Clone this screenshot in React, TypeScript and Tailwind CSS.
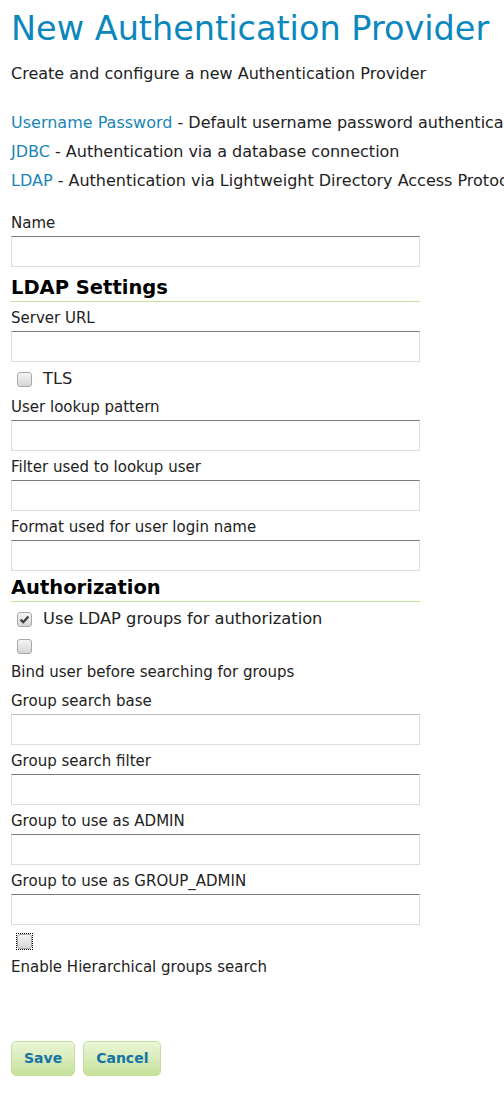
import React from 'react';

const font = { fontFamily: '"DejaVu Sans", Verdana, sans-serif' };

function Box({ checked = false, focus = false }: { checked?: boolean; focus?: boolean }) {
  return (
    <span className={`inline-flex h-[15px] w-[15px] items-center justify-center ${focus ? 'outline-1 outline-dotted outline-black' : ''}`}>
      <span className="flex h-[15px] w-[15px] items-center justify-center rounded-[3px] border border-[#a8a8a8] bg-gradient-to-b from-[#f4f4f4] to-[#d6d6d6]">
        {checked && (
          <svg width="11" height="11" viewBox="0 0 11 11">
            <path d="M1.6 5.6 L4.3 8.2 L9.4 2.4" fill="none" stroke="#3a3a3a" strokeWidth="2.2" />
          </svg>
        )}
      </span>
    </span>
  );
}

function Field({ label, light = false }: { label: string; light?: boolean }) {
  return (
    <div className="flex flex-col">
      <label className="text-[15px] leading-[20px] text-[#222]">{label}</label>
      <input
        className={`mt-[3px] h-[31px] w-[409px] border border-[#dcdcdc] ${light ? 'border-t-[#bdbdbd]' : 'border-t-[#7a7a7a]'} bg-white`}
      />
    </div>
  );
}

function Section({ title, top }: { title: string; top: string }) {
  return (
    <h2 className={`${top} w-[409px] border-b border-[#c5e09a] pb-[4px] text-[19.5px] font-bold leading-[18px] text-black`}>
      {title}
    </h2>
  );
}

function Check({ label, checked = false }: { label: string; checked?: boolean }) {
  return (
    <div className="flex items-center gap-[11px] pl-[6px] text-[16.3px] leading-[20px]">
      <Box checked={checked} />
      <span>{label}</span>
    </div>
  );
}

export default function App() {
  return (
    <div className="min-h-screen overflow-hidden bg-white px-[11px] pt-[7px] text-[#222]" style={font}>
      <h1 className="whitespace-nowrap text-[33.5px] leading-[44px] text-[#0a87bd]">New Authentication Provider</h1>
      <p className="mt-[13px] whitespace-nowrap text-[16px] leading-[20px]">Create and configure a new Authentication Provider</p>

      <div className="mt-[24px] flex flex-col whitespace-nowrap text-[16px] leading-[29px]">
        <div>
          <a className="text-[#1a86b6]">Username Password</a> - Default username password authentication
        </div>
        <div>
          <a className="text-[#1a86b6]">JDBC</a> - Authentication via a database connection
        </div>
        <div>
          <a className="text-[#1a86b6]">LDAP</a> - Authentication via Lightweight Directory Access Protocol
        </div>
      </div>

      <div className="mt-[18px]">
        <Field label="Name" />
      </div>

      <Section title="LDAP Settings" top="mt-[12px]" />
      <div className="mt-[6px] flex flex-col">
        <Field label="Server URL" />
        <div className="mt-[7px]">
          <Check label="TLS" />
        </div>
        <div className="mt-[8px] flex flex-col gap-[6px]">
          <Field label="User lookup pattern" />
          <Field label="Filter used to lookup user" />
          <Field label="Format used for user login name" />
        </div>
      </div>

      <Section title="Authorization" top="mt-[8px]" />
      <div className="mt-[7px] flex flex-col">
        <Check label="Use LDAP groups for authorization" checked />
        <div className="mt-[10px] flex pl-[6px]">
          <Box />
        </div>
        <div className="mt-[8px] text-[15px] leading-[20px]">Bind user before searching for groups</div>
        <div className="mt-[9px] flex flex-col gap-[6px]">
          <Field label="Group search base" light />
          <Field label="Group search filter" />
          <Field label="Group to use as ADMIN" />
          <Field label="Group to use as GROUP_ADMIN" />
        </div>
        <div className="mt-[9px] flex pl-[6px]">
          <Box focus />
        </div>
        <div className="mt-[8px] text-[15px] leading-[20px]">Enable Hierarchical groups search</div>
      </div>

      <div className="mt-[64px] flex gap-[8px]">
        <button className="h-[35px] rounded-[5px] border border-[#c3df9c] bg-gradient-to-b from-[#ebf6d8] to-[#c6e19a] px-[12px] text-[14px] font-bold text-[#1673a6]">
          Save
        </button>
        <button className="h-[35px] rounded-[5px] border border-[#c3df9c] bg-gradient-to-b from-[#ebf6d8] to-[#c6e19a] px-[12px] text-[14px] font-bold text-[#1673a6]">
          Cancel
        </button>
      </div>
    </div>
  );
}
